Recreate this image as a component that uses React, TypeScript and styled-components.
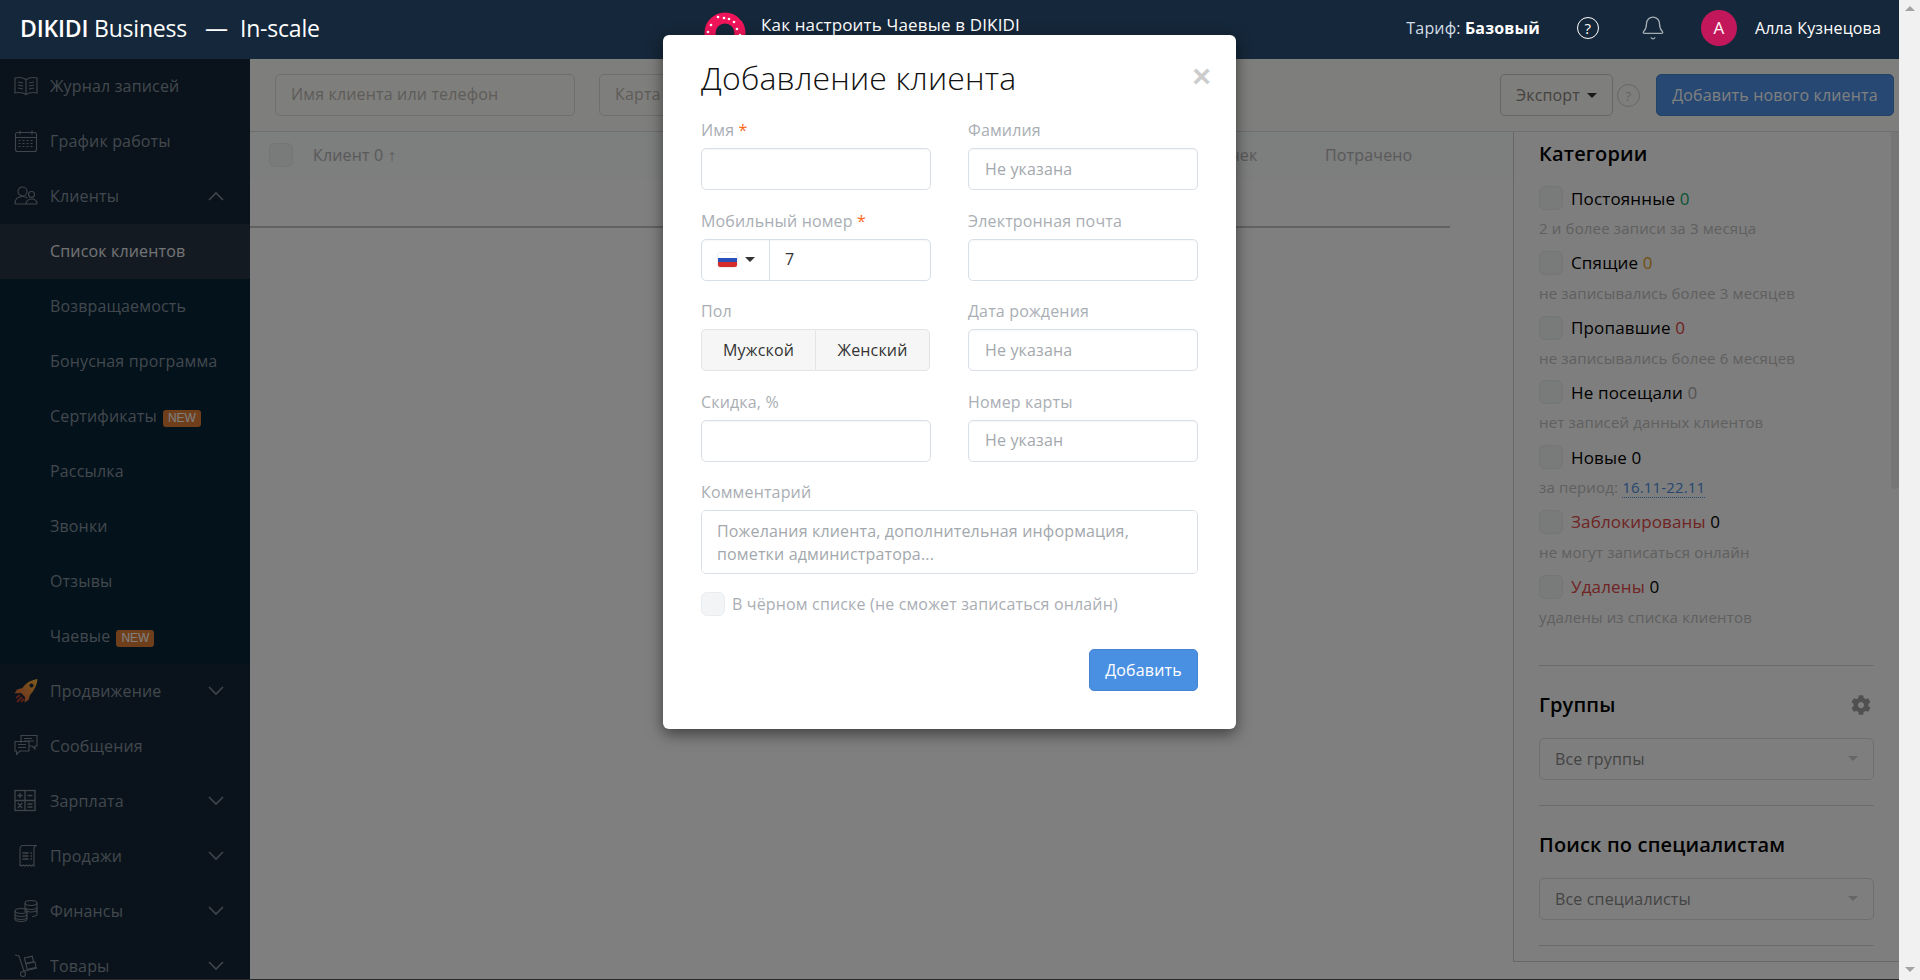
import React from "react";
import styled, { createGlobalStyle } from "styled-components";
import { FaCog } from "react-icons/fa";
import { Bell } from "lucide-react";

const GlobalStyle = createGlobalStyle`
  html, body {
    margin: 0;
    height: 100%;
    overflow: hidden;
    background: #f1f1f1;
  }
  * {
    box-sizing: border-box;
  }
  body {
    font-family: "Open Sans", "Liberation Sans", sans-serif;
    font-size: 16px;
    letter-spacing: 0.01em;
    color: #333;
  }
  input, textarea, button {
    letter-spacing: inherit;
  }
`;

const Screen = styled.div`
  display: flex;
  height: 980px;
  position: relative;
`;

const Page = styled.div`
  width: 1899px;
  height: 980px;
  display: flex;
  flex-direction: column;
  position: relative;
  overflow: hidden;
  background: #fff;
  border-bottom: 1px solid #2a2a2a;
`;

const WindowScroll = styled.div`
  width: 21px;
  height: 980px;
  background: #f1f1f1;
  display: flex;
  flex-direction: column;
  justify-content: space-between;
  align-items: center;
  padding: 6px 0 8px;
`;

const ScrollArrow = styled.span<{ $up?: boolean }>`
  width: 0;
  height: 0;
  border-left: 5px solid transparent;
  border-right: 5px solid transparent;
  ${(p) => (p.$up ? "border-bottom: 5px solid #a3a3a3;" : "border-top: 5px solid #a3a3a3;")}
`;

const Header = styled.header`
  height: 59px;
  flex: none;
  background: #15273a;
  color: #fff;
  display: flex;
  align-items: center;
  padding: 0 18px 0 20px;
  position: relative;
  z-index: 3;
`;

const Brand = styled.div`
  font-size: 23px;
  width: 660px;
  white-space: nowrap;
  letter-spacing: -0.2px;
  padding-bottom: 4px;
  b {
    font-weight: 600;
  }
  i {
    font-style: normal;
    margin: 0 12px 0 18px;
  }
`;

const Promo = styled.div`
  display: flex;
  align-items: center;
  gap: 15px;
  font-size: 17px;
  height: 59px;
  margin-left: 24px;
  padding-bottom: 10px;
  white-space: nowrap;
  svg {
    flex: none;
    margin-top: 14px;
  }
`;

const HeaderRight = styled.div`
  margin-left: auto;
  display: flex;
  align-items: center;
  height: 59px;
  padding-bottom: 4px;
`;

const Tariff = styled.div`
  font-size: 16px;
  color: #d4dee6;
  b {
    color: #fff;
    font-weight: 700;
  }
`;

const HeaderHelp = styled.span`
  width: 22px;
  height: 22px;
  border: 1.5px solid #fff;
  border-radius: 50%;
  display: flex;
  align-items: center;
  justify-content: center;
  font-size: 15px;
  margin-left: 37px;
`;

const BellWrap = styled.span`
  display: flex;
  margin-left: 41px;
  color: #a5adb4;
`;

const Avatar = styled.span`
  width: 36px;
  height: 36px;
  border-radius: 50%;
  background: #c2185b;
  display: flex;
  align-items: center;
  justify-content: center;
  font-size: 17px;
  margin-left: 35px;
`;

const UserName = styled.span`
  margin-left: 18px;
`;

const Body = styled.div`
  flex: 1;
  min-height: 0;
  display: flex;
`;

const Sidebar = styled.nav`
  width: 250px;
  flex: none;
  background: #142636;
  overflow: hidden;
`;

const NavRow = styled.div<{ $sub?: boolean; $active?: boolean }>`
  height: 55px;
  display: flex;
  align-items: center;
  padding: 0 26px 2px 14px;
  color: ${(p) => (p.$active ? "#e4e6e8" : "#84919c")};
  background: ${(p) => (p.$active ? "#283444" : p.$sub ? "#082436" : "transparent")};
  ${(p) => p.$sub && "padding-left: 50px;"}
`;

const NavIcon = styled.span`
  width: 24px;
  height: 24px;
  margin-right: 12px;
  display: flex;
  flex: none;
  color: #7f8a94;
`;

const NavLabel = styled.span`
  flex: 1;
  white-space: nowrap;
`;

const NewBadge = styled.span`
  font-family: "Liberation Sans", sans-serif;
  font-size: 12px;
  line-height: 16px;
  display: inline-block;
  height: 17px;
  padding: 0 5px;
  margin-left: 6px;
  border-radius: 3px;
  background: #de7e38;
  color: #fff;
  letter-spacing: 0;
`;

const Main = styled.main`
  flex: 1;
  min-width: 0;
  display: flex;
  flex-direction: column;
`;

const Toolbar = styled.div`
  height: 73px;
  flex: none;
  display: flex;
  align-items: flex-start;
  padding: 15px 5px 0 25px;
  background: #fdfdf8;
  border-bottom: 1px solid #dcdcdc;
`;

const SearchInput = styled.input<{ $width: number }>`
  width: ${(p) => p.$width}px;
  height: 42px;
  border: 1px solid #ddd;
  border-radius: 5px;
  background: #fdfdf9;
  padding: 0 15px 2px;
  margin-right: 24px;
  font: inherit;
  &::placeholder {
    color: #bdb8b2;
    opacity: 1;
  }
`;

const ExportButton = styled.button`
  width: 113px;
  height: 42px;
  margin-left: auto;
  border: 1px solid #ccc;
  border-radius: 5px;
  background: #fdfdf8;
  color: #8c8480;
  font: inherit;
  display: flex;
  align-items: center;
  justify-content: center;
  gap: 7px;
`;

const Caret = styled.span<{ $color?: string }>`
  width: 0;
  height: 0;
  border-left: 5px solid transparent;
  border-right: 5px solid transparent;
  border-top: 5px solid ${(p) => p.$color || "#333"};
`;

const ToolbarHelp = styled.span`
  width: 23px;
  height: 23px;
  margin: 10px 16px 0 4px;
  border: 1px solid #ccc;
  border-radius: 50%;
  color: #ccc;
  font-size: 13px;
  display: flex;
  align-items: center;
  justify-content: center;
`;

const AddClientButton = styled.button`
  width: 238px;
  height: 42px;
  border: 1px solid #4584cf;
  border-radius: 5px;
  background: #4c90e6;
  color: #fff;
  font: inherit;
`;

const Content = styled.div`
  flex: 1;
  min-height: 0;
  display: flex;
  align-items: flex-start;
`;

const TableArea = styled.div`
  width: 1263px;
  flex: none;
`;

const TableHead = styled.div`
  height: 47px;
  display: flex;
  align-items: center;
  padding: 0 0 2px 19px;
  background: #fafcfc;
  color: #b4b4b4;
`;

const HeadCheck = styled.span`
  width: 24px;
  height: 24px;
  flex: none;
  border-radius: 6px;
  background: #f2f6f5;
  border: 1px solid #e6ecea;
`;

const ClientCol = styled.span`
  margin-left: 20px;
  flex: 1;
`;

const HeadCol = styled.span<{ $width: number; $pad?: number }>`
  width: ${(p) => p.$width}px;
  padding-right: ${(p) => p.$pad || 0}px;
  text-align: ${(p) => (p.$pad ? "right" : "left")};
  white-space: nowrap;
`;

const EmptyRow = styled.div`
  height: 49px;
  width: 1200px;
  border-bottom: 2px solid #c4c4c4;
`;

const SidePanel = styled.aside`
  flex: 1;
  height: 830px;
  position: relative;
  overflow: hidden;
  background: #fcfcfc;
  border-left: 1px solid #cfcfcf;
  border-bottom: 1px solid #cfcfcf;
  padding: 7px 25px 0;
`;

const PanelThumb = styled.span`
  position: absolute;
  top: 0;
  right: 0;
  width: 8px;
  height: 357px;
  border-radius: 0 0 4px 4px;
  background: #ececec;
`;

const PanelTitle = styled.h3`
  margin: 0;
  font-size: 20px;
  line-height: 30px;
  font-weight: 600;
  color: #000;
`;

const CategoryList = styled.div`
  margin-top: 17px;
  display: flex;
  flex-direction: column;
  gap: 10.8px;
  padding-bottom: 36px;
  border-bottom: 1px solid #d8d8d8;
`;

const CategoryRow = styled.div`
  display: flex;
  align-items: center;
  gap: 8px;
  height: 24px;
  font-size: 17px;
  color: #000;
`;

const PanelCheck = styled(HeadCheck)``;

const CategoryName = styled.span<{ $danger?: boolean }>`
  color: ${(p) => (p.$danger ? "#e04848" : "#000")};
`;

const CategoryCount = styled.span<{ $color: string }>`
  color: ${(p) => p.$color};
`;

const CategoryHint = styled.div`
  font-size: 15px;
  line-height: 24px;
  margin-top: 6px;
  color: #c0c0c0;
`;

const PeriodLink = styled.span`
  color: #4a90e2;
  border-bottom: 1px dotted #4a90e2;
`;

const PanelSection = styled.section`
  padding: 24px 0 25px;
  border-bottom: 1px solid #d8d8d8;
`;

const SectionHead = styled.div`
  display: flex;
  align-items: center;
  justify-content: space-between;
  padding-right: 3px;
  margin-bottom: 18px;
  svg {
    color: #a0a0a0;
    font-size: 20px;
  }
`;

const PanelSelect = styled.div`
  height: 42px;
  border: 1px solid #ddd;
  border-radius: 5px;
  padding: 0 15px;
  display: flex;
  align-items: center;
  justify-content: space-between;
  color: #888;
`;

const Backdrop = styled.div`
  position: absolute;
  left: 0;
  right: 0;
  top: 59px;
  bottom: 0;
  background: rgba(0, 0, 0, 0.5);
  z-index: 4;
`;

const ModalLayer = styled.div`
  position: absolute;
  inset: 0;
  z-index: 5;
  display: flex;
  justify-content: center;
  padding-top: 35px;
`;

const Modal = styled.div`
  width: 573px;
  height: 694px;
  background: #fff;
  border-radius: 6px;
  box-shadow: 0 5px 15px rgba(0, 0, 0, 0.5);
  padding: 22px 38px 0;
  position: relative;
`;

const ModalTitle = styled.h2`
  margin: 0 0 21px;
  font-size: 32px;
  line-height: 42px;
  font-weight: 300;
  color: #111;
`;

const CloseMark = styled.span`
  position: absolute;
  top: 18px;
  right: 25px;
  font-family: "Liberation Sans", sans-serif;
  font-weight: 700;
  font-size: 32px;
  line-height: 46px;
  color: #ccc;
`;

const FormGrid = styled.div`
  display: grid;
  grid-template-columns: 230px 230px;
  column-gap: 37px;
  row-gap: 20.5px;
`;

const Field = styled.label<{ $wide?: boolean }>`
  display: block;
  ${(p) => p.$wide && "grid-column: 1 / -1;"}
`;

const FieldLabel = styled.div`
  line-height: 20px;
  margin-bottom: 8px;
  color: #a9aeb4;
  em {
    font-style: normal;
    color: #ff6a1a;
  }
`;

const TextInput = styled.input`
  display: block;
  width: 100%;
  height: 42px;
  border: 1px solid #d9dfe6;
  border-radius: 5px;
  padding: 0 16px 1px;
  font: inherit;
  color: #333;
  box-shadow: inset 0 1px 2px rgba(0, 0, 0, 0.04);
  &::placeholder {
    color: #a3a8ad;
    opacity: 1;
  }
`;

const CommentInput = styled.textarea`
  display: block;
  width: 100%;
  height: 64px;
  border: 1px solid #d9dfe6;
  border-radius: 5px;
  padding: 9px 15px;
  font: inherit;
  line-height: 23px;
  resize: none;
  &::placeholder {
    color: #a3a8ad;
    opacity: 1;
  }
`;

const PhoneBox = styled.div`
  height: 42px;
  display: flex;
  align-items: center;
  border: 1px solid #d9dfe6;
  border-radius: 5px;
  box-shadow: inset 0 1px 2px rgba(0, 0, 0, 0.04);
`;

const FlagCell = styled.div`
  width: 68px;
  height: 100%;
  flex: none;
  display: flex;
  align-items: center;
  gap: 8px;
  padding-left: 16px;
  border-right: 1px solid #d9dfe6;
`;

const Flag = styled.span`
  width: 19px;
  height: 14px;
  border-radius: 2px;
  box-shadow: 0 0 2px rgba(0, 0, 0, 0.25);
  background: linear-gradient(#fff 0 33%, #2b50b8 33% 66%, #d52b2b 66%);
`;

const PhoneValue = styled.span`
  padding: 0 0 1px 15px;
  color: #333;
`;

const GenderGroup = styled.div`
  display: flex;
  width: 229px;
  height: 42px;
`;

const GenderButton = styled.button`
  flex: 1;
  border: 1px solid #e2e4e6;
  background: #f6f6f6;
  color: #333;
  font: inherit;
  padding: 0;
  &:first-child {
    border-radius: 5px 0 0 5px;
    border-right: 0;
  }
  &:last-child {
    border-radius: 0 5px 5px 0;
  }
`;

const BlackList = styled.div`
  display: flex;
  align-items: center;
  gap: 7px;
  margin-top: 18px;
  height: 24px;
  color: #a9aeb4;
`;

const ModalCheck = styled.span`
  width: 24px;
  height: 24px;
  border-radius: 6px;
  background: #f2f4f6;
  border: 1px solid #e9edf0;
`;

const ModalFooter = styled.div`
  display: flex;
  justify-content: flex-end;
  margin-top: 33px;
`;

const SubmitButton = styled.button`
  width: 109px;
  height: 42px;
  border: 1px solid #4584cf;
  border-radius: 5px;
  background: #4a90e2;
  color: #fff;
  font: inherit;
`;

const Chevron = ({ up }: { up?: boolean }) => (
  <svg width="16" height="10" viewBox="0 0 16 10" fill="none" stroke="#7f8a94" strokeWidth="1.6">
    <polyline points={up ? "1,9 8,2 15,9" : "1,1 8,8 15,1"} />
  </svg>
);

const iconProps = {
  width: 24,
  height: 24,
  viewBox: "0 0 24 24",
  fill: "none",
  stroke: "currentColor",
  strokeWidth: 1.1,
};

const icons: Record<string, React.ReactNode> = {
  book: (
    <svg {...iconProps}>
      <path d="M1 4c4-1 8-.5 11 1.500C15 3.500 19 3 23 4v15c-4-1-8-.5-11 1.500C9 18.500 5 18 1 19z" />
      <path d="M12 5.500v15M4 8l5 1M4 11l5 1M4 14l5 1M15 9l5-1M15 12l5-1M15 15l5-1" />
    </svg>
  ),
  calendar: (
    <svg {...iconProps}>
      <rect x="1.500" y="3.500" width="21" height="19" rx="2" />
      <path d="M1.500 8.500h21M6 1.500v4M18 1.500v4" />
      <path strokeDasharray="2 2" d="M4.500 11.500h15M4.500 14.500h15M4.500 17.500h15" />
    </svg>
  ),
  users: (
    <svg {...iconProps}>
      <circle cx="8.500" cy="7.500" r="4.500" />
      <path d="M1 20c0-5 3-7.500 7.500-7.500 2 0 3.500.5 4.500 1.500M1 20h22" />
      <circle cx="17.500" cy="10.500" r="3" />
      <path d="M12 20c0-3 2-5 5.500-5S23 17 23 20" />
    </svg>
  ),
  rocket: (
    <svg width="24" height="24" viewBox="0 0 24 24">
      <defs>
        <linearGradient id="rocketFill" x1="1" y1="0" x2="0" y2="1">
          <stop offset="0" stopColor="#ffb83c" />
          <stop offset="1" stopColor="#d8583c" />
        </linearGradient>
      </defs>
      <path
        fill="url(#rocketFill)"
        fillRule="evenodd"
        d="M23.500 0C17 1 11.500 4 8.500 9L3 10.500l-2.500 4 6.500-.5 4 4-.5 5.500 4-2.500 1.500-5C20 12 23 6 23.500 0zM17.500 4.500a2 2 0 1 0 .01 0z"
      />
      <path stroke="#b0402f" strokeWidth="2" d="M6 16l-4 3M8 18l-5 5M10 20l-3 3" />
    </svg>
  ),
  chat: (
    <svg {...iconProps}>
      <path d="M7 9V1.500h16V12h-2v3l-3-3h-3" />
      <path d="M1 7.500h14V17H6l-3.500 3.500V17H1z" />
      <path d="M10 4.500h8M10 7h10M4 10.500h8M4 13.500h8" />
    </svg>
  ),
  calc: (
    <svg {...iconProps} strokeWidth={1.3}>
      <rect x="1" y="1.500" width="20" height="20" />
      <path d="M11 1.500v20M1 11.500h20M3.500 6.500h5M6 4v5M13.500 6.500h5M3.800 14l4.400 5M8.200 14l-4.400 5M13.500 15h5M13.500 18h5" />
    </svg>
  ),
  receipt: (
    <svg {...iconProps}>
      <path d="M6 22V5c0-2 1-3.500 3-3.500h14c-2 0-3 1-3 3.500v17l-1.500-1-1.500 1-1.500-1-1.500 1-1.500-1-1.500 1-1.500-1-1.500 1-1.500-1z" />
      <path strokeWidth={1.6} d="M8.500 9h6M8.500 12h6M8.500 15h6M16.500 9h1.500M16.500 12h1.500M16.500 15h1.500" />
    </svg>
  ),
  coins: (
    <svg {...iconProps}>
      <ellipse cx="17" cy="4" rx="6" ry="2.500" />
      <path d="M11 4v9M23 4v11c0 1.400-2.500 2.500-5 2.500M11 8c0 1.400 2.700 2.500 6 2.500s6-1.100 6-2.500M12 12c1.500.8 3 1 5 1 3.300 0 6-1 6-2.500" />
      <ellipse cx="7" cy="12" rx="6" ry="2.500" />
      <path d="M1 12v8c0 1.400 2.700 2.500 6 2.500s6-1.100 6-2.500v-8M1 15c0 1.400 2.700 2.500 6 2.500s6-1.100 6-2.500M1 18c0 1.400 2.700 2.500 6 2.500s6-1.100 6-2.500" />
    </svg>
  ),
  truck: (
    <svg {...iconProps}>
      <path d="M1 1l4 1 5 15 13-3" />
      <circle cx="9" cy="20" r="2.500" />
      <rect x="11" y="3" width="8" height="6" transform="rotate(-12 15 6)" />
      <rect x="12.500" y="8.500" width="9" height="6" transform="rotate(-12 17 11.500)" />
    </svg>
  ),
};

type NavItem = {
  label: string;
  icon?: string;
  chevron?: "up" | "down";
  isNew?: boolean;
  active?: boolean;
};

const navItems: NavItem[] = [
  { label: "Журнал записей", icon: "book" },
  { label: "График работы", icon: "calendar" },
  { label: "Клиенты", icon: "users", chevron: "up" },
  { label: "Список клиентов", active: true },
  { label: "Возвращаемость" },
  { label: "Бонусная программа" },
  { label: "Сертификаты", isNew: true },
  { label: "Рассылка" },
  { label: "Звонки" },
  { label: "Отзывы" },
  { label: "Чаевые", isNew: true },
  { label: "Продвижение", icon: "rocket", chevron: "down" },
  { label: "Сообщения", icon: "chat" },
  { label: "Зарплата", icon: "calc", chevron: "down" },
  { label: "Продажи", icon: "receipt", chevron: "down" },
  { label: "Финансы", icon: "coins", chevron: "down" },
  { label: "Товары", icon: "truck", chevron: "down" },
];

const categories = [
  { name: "Постоянные", count: "#14a86e", hint: "2 и более записи за 3 месяца" },
  { name: "Спящие", count: "#e8a020", hint: "не записывались более 3 месяцев" },
  { name: "Пропавшие", count: "#e04848", hint: "не записывались более 6 месяцев" },
  { name: "Не посещали", count: "#aaa", hint: "нет записей данных клиентов" },
  { name: "Новые", count: "#000", hint: "за период: " },
  { name: "Заблокированы", count: "#000", danger: true, hint: "не могут записаться онлайн" },
  { name: "Удалены", count: "#000", danger: true, hint: "удалены из списка клиентов" },
];

const sprinkles = [
  [717, 12], [723, 13], [728, 14], [733, 17], [710, 20], [707, 27], [739, 30], [736, 24], [713, 33],
];

const Donut = () => (
  <svg width="42" height="42" viewBox="703 6 42 42">
    <circle cx="724" cy="28" r="15" fill="none" stroke="#f0145a" strokeWidth="11" />
    <circle cx="743" cy="10" r="6" fill="#15273a" />
    {sprinkles.map(([x, y]) => (
      <circle key={`${x}-${y}`} cx={x} cy={y} r="1.300" fill="#fff" />
    ))}
  </svg>
);

export default function App() {
  return (
    <>
      <GlobalStyle />
      <Screen>
        <Page>
          <Header>
            <Brand>
              <b>DIKIDI</b> Business<i>—</i>In-scale
            </Brand>
            <Promo>
              <Donut />
              <span>Как настроить Чаевые в DIKIDI</span>
            </Promo>
            <HeaderRight>
              <Tariff>
                Тариф: <b>Базовый</b>
              </Tariff>
              <HeaderHelp>?</HeaderHelp>
              <BellWrap>
                <Bell size={26} strokeWidth={1.2} />
              </BellWrap>
              <Avatar>А</Avatar>
              <UserName>Алла Кузнецова</UserName>
            </HeaderRight>
          </Header>
          <Body>
            <Sidebar>
              {navItems.map((item) => (
                <NavRow key={item.label} $sub={!item.icon} $active={item.active}>
                  {item.icon && <NavIcon>{icons[item.icon]}</NavIcon>}
                  <NavLabel>
                    {item.label}
                    {item.isNew && <NewBadge>NEW</NewBadge>}
                  </NavLabel>
                  {item.chevron && <Chevron up={item.chevron === "up"} />}
                </NavRow>
              ))}
            </Sidebar>
            <Main>
              <Toolbar>
                <SearchInput $width={300} placeholder="Имя клиента или телефон" />
                <SearchInput $width={300} placeholder="Карта" />
                <ExportButton>
                  Экспорт <Caret />
                </ExportButton>
                <ToolbarHelp>?</ToolbarHelp>
                <AddClientButton>Добавить нового клиента</AddClientButton>
              </Toolbar>
              <Content>
                <TableArea>
                  <TableHead>
                    <HeadCheck />
                    <ClientCol>Клиент 0 ↑</ClientCol>
                    <HeadCol $width={169} $pad={69}>Средний чек</HeadCol>
                    <HeadCol $width={188}>Потрачено</HeadCol>
                  </TableHead>
                  <EmptyRow />
                </TableArea>
                <SidePanel>
                  <PanelThumb />
                  <PanelTitle>Категории</PanelTitle>
                  <CategoryList>
                    {categories.map((cat) => (
                      <div key={cat.name}>
                        <CategoryRow>
                          <PanelCheck />
                          <span>
                            <CategoryName $danger={cat.danger}>{cat.name}</CategoryName>{" "}
                            <CategoryCount $color={cat.count}>0</CategoryCount>
                          </span>
                        </CategoryRow>
                        <CategoryHint>
                          {cat.hint}
                          {cat.name === "Новые" && <PeriodLink>16.11-22.11</PeriodLink>}
                        </CategoryHint>
                      </div>
                    ))}
                  </CategoryList>
                  <PanelSection>
                    <SectionHead>
                      <PanelTitle>Группы</PanelTitle>
                      <FaCog />
                    </SectionHead>
                    <PanelSelect>
                      Все группы <Caret $color="#ccc" />
                    </PanelSelect>
                  </PanelSection>
                  <PanelSection>
                    <SectionHead>
                      <PanelTitle>Поиск по специалистам</PanelTitle>
                    </SectionHead>
                    <PanelSelect>
                      Все специалисты <Caret $color="#ccc" />
                    </PanelSelect>
                  </PanelSection>
                </SidePanel>
              </Content>
            </Main>
          </Body>
          <Backdrop />
          <ModalLayer>
            <Modal>
              <ModalTitle>Добавление клиента</ModalTitle>
              <CloseMark>×</CloseMark>
              <FormGrid>
                <Field>
                  <FieldLabel>
                    Имя <em>*</em>
                  </FieldLabel>
                  <TextInput />
                </Field>
                <Field>
                  <FieldLabel>Фамилия</FieldLabel>
                  <TextInput placeholder="Не указана" />
                </Field>
                <Field>
                  <FieldLabel>
                    Мобильный номер <em>*</em>
                  </FieldLabel>
                  <PhoneBox>
                    <FlagCell>
                      <Flag />
                      <Caret />
                    </FlagCell>
                    <PhoneValue>7</PhoneValue>
                  </PhoneBox>
                </Field>
                <Field>
                  <FieldLabel>Электронная почта</FieldLabel>
                  <TextInput />
                </Field>
                <Field>
                  <FieldLabel>Пол</FieldLabel>
                  <GenderGroup>
                    <GenderButton>Мужской</GenderButton>
                    <GenderButton>Женский</GenderButton>
                  </GenderGroup>
                </Field>
                <Field>
                  <FieldLabel>Дата рождения</FieldLabel>
                  <TextInput placeholder="Не указана" />
                </Field>
                <Field>
                  <FieldLabel>Скидка, %</FieldLabel>
                  <TextInput />
                </Field>
                <Field>
                  <FieldLabel>Номер карты</FieldLabel>
                  <TextInput placeholder="Не указан" />
                </Field>
                <Field $wide>
                  <FieldLabel>Комментарий</FieldLabel>
                  <CommentInput placeholder="Пожелания клиента, дополнительная информация, пометки администратора..." />
                </Field>
              </FormGrid>
              <BlackList>
                <ModalCheck />В чёрном списке (не сможет записаться онлайн)
              </BlackList>
              <ModalFooter>
                <SubmitButton>Добавить</SubmitButton>
              </ModalFooter>
            </Modal>
          </ModalLayer>
        </Page>
        <WindowScroll>
          <ScrollArrow $up />
          <ScrollArrow />
        </WindowScroll>
      </Screen>
    </>
  );
}
